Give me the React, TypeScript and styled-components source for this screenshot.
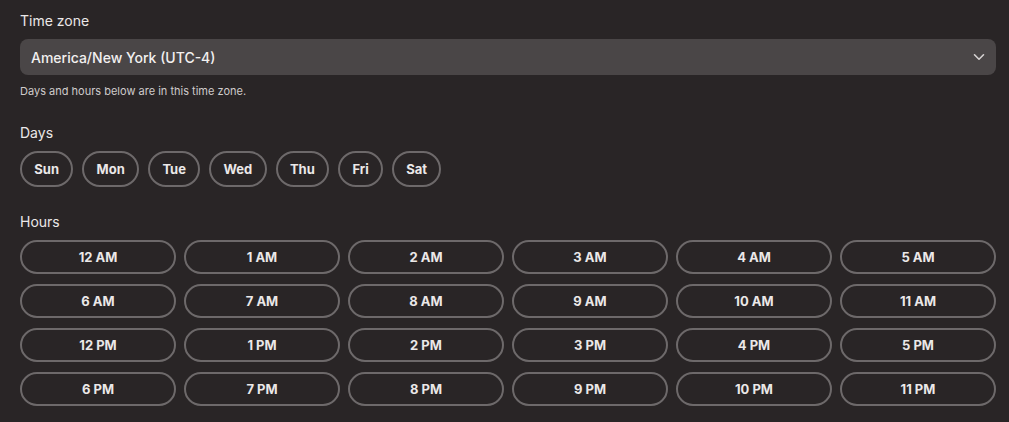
import React, { useState } from 'react';
import styled, { createGlobalStyle } from 'styled-components';

const GlobalStyle = createGlobalStyle`
    html, body {
        margin: 0;
        padding: 0;
        background: #292526;
    }
    body {
        font-family: Inter, "Noto Sans", sans-serif;
        color: #ebe8e8;
    }
`;

const DAYS = ['Sun', 'Mon', 'Tue', 'Wed', 'Thu', 'Fri', 'Sat'];

const HOURS = Array.from({ length: 24 }, (_, i) => {
    const h = i % 12 === 0 ? 12 : i % 12;
    return `${h} ${i < 12 ? 'AM' : 'PM'}`;
});

const ChevronDown = () => (
    <svg width="12" height="8" viewBox="0 0 12 8" fill="none">
        <path d="M1.5 1.8L6 6.2L10.5 1.8" stroke="#d6d3d3" strokeWidth="1.6" strokeLinecap="round" strokeLinejoin="round" />
    </svg>
);

export default function App() {
    const [days, setDays] = useState<string[]>([]);
    const [hours, setHours] = useState<string[]>([]);

    const toggle = (list: string[], set: (v: string[]) => void, item: string) => {
        set(list.includes(item) ? list.filter(x => x !== item) : [...list, item]);
    };

    return (
        <>
            <GlobalStyle />
            <Page>
                <Section>
                    <Label>Time zone</Label>
                    <Select>
                        <span>America/New York (UTC-4)</span>
                        <ChevronDown />
                    </Select>
                    <Hint>Days and hours below are in this time zone.</Hint>
                </Section>

                <Section spacing={26}>
                    <Label>Days</Label>
                    <DayRow>
                        {DAYS.map(day => (
                            <DayPill key={day} selected={days.includes(day)} onClick={() => toggle(days, setDays, day)}>
                                {day}
                            </DayPill>
                        ))}
                    </DayRow>
                </Section>

                <Section spacing={26}>
                    <Label>Hours</Label>
                    <HourGrid>
                        {HOURS.map(hour => (
                            <HourPill key={hour} selected={hours.includes(hour)} onClick={() => toggle(hours, setHours, hour)}>
                                {hour}
                            </HourPill>
                        ))}
                    </HourGrid>
                </Section>
            </Page>
        </>
    );
}

const Page = styled.div`
    width: 976px;
    padding: 12px 13px 0 20px;
    display: flex;
    flex-direction: column;
`;

const Section = styled.div<{ spacing?: number }>`
    display: flex;
    flex-direction: column;
    margin-top: ${p => p.spacing ?? 0}px;
`;

const Label = styled.div`
    font-size: 14px;
    line-height: 17px;
    color: #ebe8e8;
    margin-bottom: 10px;
`;

const Select = styled.div`
    height: 36px;
    box-sizing: border-box;
    border-radius: 8px;
    background: #4a4647;
    display: flex;
    align-items: center;
    justify-content: space-between;
    padding: 0 11px 0 11px;
    font-size: 14px;
    font-weight: 500;
    color: #f2f0f0;
`;

const Hint = styled.div`
    font-size: 11px;
    line-height: 14px;
    color: #cfcbcb;
    margin-top: 9px;
`;

const Pill = styled.button<{ selected?: boolean }>`
    box-sizing: border-box;
    border: 2px solid ${p => p.selected ? '#e8e6e6' : '#6d696a'};
    background: ${p => p.selected ? '#4a4647' : 'transparent'};
    color: #ebe8e8;
    font-family: Inter, "Noto Sans", sans-serif;
    font-weight: 700;
    font-size: 13px;
    border-radius: 999px;
    cursor: pointer;
    display: flex;
    align-items: center;
    justify-content: center;
    padding: 0;
`;

const DayRow = styled.div`
    display: flex;
    gap: 9px;
`;

const DayPill = styled(Pill)`
    height: 36px;
    padding: 0 12.3px;
`;

const HourGrid = styled.div`
    display: grid;
    grid-template-columns: repeat(6, 1fr);
    column-gap: 8px;
    row-gap: 10px;
`;

const HourPill = styled(Pill)`
    height: 34px;
`;
